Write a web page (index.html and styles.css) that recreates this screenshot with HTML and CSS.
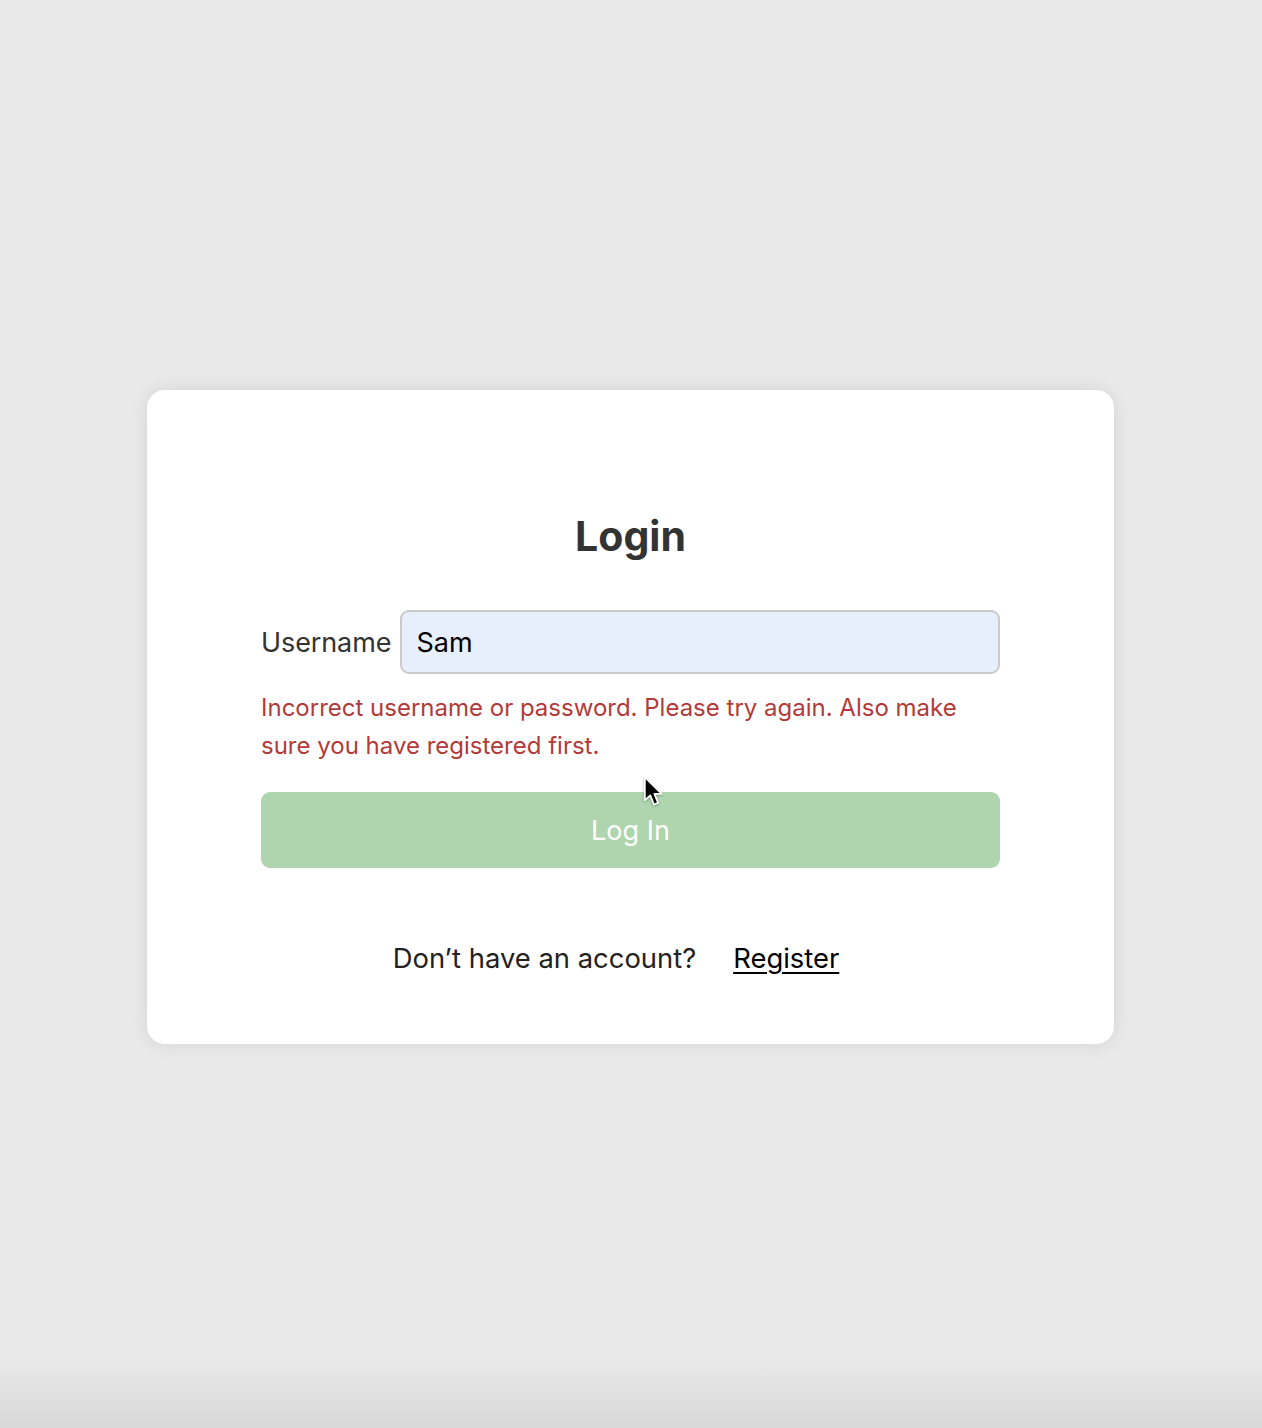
FILE: index.html
```html
<!DOCTYPE html>
<html lang="en">
<head>
<meta charset="utf-8">
<title>Login</title>
<link rel="stylesheet" href="styles.css">
</head>
<body>
<main class="card">
  <h1 class="title">Login</h1>
  <div class="field">
    <label class="label" for="username">Username</label>
    <input class="input" id="username" type="text" value="Sam">
  </div>
  <p class="error">Incorrect username or password. Please try again. Also make sure you have registered first.</p>
  <button class="btn" type="button">Log In</button>
  <div class="footer">
    <span class="footer-text">Don’t have an account?</span>
    <a class="link" href="#">Register</a>
  </div>
</main>
<svg class="cursor" width="24" height="34" viewBox="0 0 20 28" aria-hidden="true">
  <path d="M1.5 1.5 L1.5 21 L6 16.8 L9.2 24.5 L12.6 23 L9.5 15.6 L15.6 15.6 Z" fill="#000" stroke="#fff" stroke-width="1.5" stroke-linejoin="round"/>
</svg>
</body>
</html>
```

FILE: styles.css
```css
* { box-sizing: border-box; }
html, body { margin: 0; height: 100%; }
body {
  min-height: 100vh;
  display: flex;
  align-items: center;
  justify-content: center;
  padding-top: 6px;
  padding-right: 1px;
  background: linear-gradient(to bottom, #e9e9e9 0, #e9e9e9 calc(100% - 70px), #d8d8d8 100%);
  font-family: "Inter", "Noto Sans", "Liberation Sans", sans-serif;
  color: #333;
  position: relative;
}
.card {
  width: 967px;
  height: 654px;
  background: #fff;
  border-radius: 18px;
  box-shadow: 0 0 18px rgba(0, 0, 0, 0.09);
  padding: 122px 114px 0 114px;
  display: flex;
  flex-direction: column;
}
.title {
  margin: 0;
  font-size: 41px;
  line-height: 48px;
  font-weight: 700;
  text-align: center;
  color: #333;
}
.field {
  margin-top: 50px;
  display: flex;
  align-items: center;
  gap: 9px;
}
.label {
  font-size: 27px;
  color: #333;
  letter-spacing: -0.1px;
}
.input {
  flex: 1;
  height: 64px;
  border: 2px solid #cacaca;
  border-radius: 9px;
  background: #e8effc;
  padding: 0 14px;
  font-family: inherit;
  font-size: 27px;
  color: #000;
  outline: none;
}
.error {
  margin: 15px 0 0;
  font-size: 24px;
  line-height: 38px;
  color: #b23a3a;
}
.btn {
  margin-top: 27px;
  height: 76px;
  width: 100%;
  border: none;
  border-radius: 9px;
  background: #aed5ad;
  color: #fff;
  font-family: inherit;
  font-size: 27px;
}
.footer {
  margin-top: 70px;
  display: flex;
  justify-content: center;
  align-items: center;
  gap: 37px;
  padding-right: 29px;
  font-size: 27.4px;
  line-height: 40px;
}
.footer-text { color: #222; }
.link {
  color: #000;
  text-decoration: underline;
  text-underline-offset: 4px;
}
.cursor {
  position: absolute;
  left: 643px;
  top: 775px;
  filter: drop-shadow(0 1px 1px rgba(0, 0, 0, 0.3));
}
```
